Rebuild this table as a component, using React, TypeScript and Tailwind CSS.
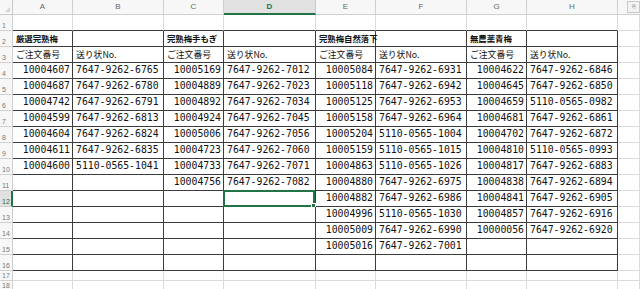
import React from "react";

const cols = ["A", "B", "C", "D", "E", "F", "G", "H", ""];

const groups: [string, [string, string][]][] = [
  [
    "厳選完熟梅",
    [
      ["10004607", "7647-9262-6765"],
      ["10004687", "7647-9262-6780"],
      ["10004742", "7647-9262-6791"],
      ["10004599", "7647-9262-6813"],
      ["10004604", "7647-9262-6824"],
      ["10004611", "7647-9262-6835"],
      ["10004600", "5110-0565-1041"],
    ],
  ],
  [
    "完熟梅手もぎ",
    [
      ["10005169", "7647-9262-7012"],
      ["10004889", "7647-9262-7023"],
      ["10004892", "7647-9262-7034"],
      ["10004924", "7647-9262-7045"],
      ["10005006", "7647-9262-7056"],
      ["10004723", "7647-9262-7060"],
      ["10004733", "7647-9262-7071"],
      ["10004756", "7647-9262-7082"],
    ],
  ],
  [
    "完熟梅自然落下",
    [
      ["10005084", "7647-9262-6931"],
      ["10005118", "7647-9262-6942"],
      ["10005125", "7647-9262-6953"],
      ["10005158", "7647-9262-6964"],
      ["10005204", "5110-0565-1004"],
      ["10005159", "5110-0565-1015"],
      ["10004863", "5110-0565-1026"],
      ["10004880", "7647-9262-6975"],
      ["10004882", "7647-9262-6986"],
      ["10004996", "5110-0565-1030"],
      ["10005009", "7647-9262-6990"],
      ["10005016", "7647-9262-7001"],
    ],
  ],
  [
    "無農薬青梅",
    [
      ["10004622", "7647-9262-6846"],
      ["10004645", "7647-9262-6850"],
      ["10004659", "5110-0565-0982"],
      ["10004681", "7647-9262-6861"],
      ["10004702", "7647-9262-6872"],
      ["10004810", "5110-0565-0993"],
      ["10004817", "7647-9262-6883"],
      ["10004838", "7647-9262-6894"],
      ["10004841", "7647-9262-6905"],
      ["10004857", "7647-9262-6916"],
      ["10000056", "7647-9262-6920"],
    ],
  ],
];

type CellData = { text: string; kind: "title" | "label" | "num" | "track" | "" };

function cellAt(row: number, col: number): CellData {
  // row 1..18, col 0..8 (A..I)
  if (col > 7) return { text: "", kind: "" };
  const g = groups[Math.floor(col / 2)];
  const isOrder = col % 2 === 0;
  if (row === 2) return isOrder ? { text: g[0], kind: "title" } : { text: "", kind: "" };
  if (row === 3) return { text: isOrder ? "ご注文番号" : "送り状No.", kind: "label" };
  const item = g[1][row - 4];
  if (row >= 4 && item) return isOrder ? { text: item[0], kind: "num" } : { text: item[1], kind: "track" };
  return { text: "", kind: "" };
}

function Cell({ row, col }: { row: number; col: number }) {
  const inTable = row >= 2 && row <= 16 && col <= 7;
  const aboveTable = row === 1 && col <= 7;
  const selected = row === 12 && col === 3;
  const c = cellAt(row, col);

  let border = "border-r border-b border-[#dadada]";
  if (inTable) border = "border-r border-b border-[#3c3c3c]";
  else if (aboveTable) border = "border-r border-b border-r-[#dadada] border-b-[#3c3c3c]";

  let content: React.ReactNode = null;
  if (c.kind === "title")
    content = <span className="pl-[3px] text-[8.4px] font-bold font-['Noto_Sans_CJK_JP',sans-serif] whitespace-nowrap">{c.text}</span>;
  else if (c.kind === "label")
    content = <span className="pl-[3px] text-[8.8px] font-['Noto_Sans_CJK_JP',sans-serif] whitespace-nowrap">{c.text}</span>;
  else if (c.kind === "num") content = <span className="ml-auto pr-[2px] text-[9.8px] whitespace-nowrap">{c.text}</span>;
  else if (c.kind === "track") content = <span className="pl-[3px] text-[9.8px] whitespace-nowrap">{c.text}</span>;

  return (
    <div className={`relative flex items-center min-w-0 text-[#111] ${border}`}>
      {content}
      {selected && (
        <div className="absolute -left-px -top-px right-0 bottom-[-1px] border-2 border-[#217346]">
          <div className="absolute -right-[3px] -bottom-[3px] w-[5px] h-[5px] bg-[#217346] border border-white" />
        </div>
      )}
    </div>
  );
}

export default function App() {
  const rows = Array.from({ length: 18 }, (_, i) => i + 1);
  return (
    <div className="w-[640px] h-[289px] overflow-hidden bg-white font-['DejaVu_Sans_Mono','Noto_Sans_CJK_JP',monospace]">
      <div className="grid grid-cols-[13px_60px_91px_60px_92px_60px_91px_60px_91px_1fr] grid-rows-[15px_repeat(16,16px)_10px_10px]">
        <div className="flex items-end justify-end pr-[2px] pb-[2px] bg-[#f7f7f7] border-r border-b border-[#c9c9c9]">
          <div className="w-0 h-0 border-l-[5px] border-l-transparent border-b-[5px] border-b-[#d3d3d3]" />
        </div>
        {cols.map((h, i) =>
          h === "D" ? (
            <div key={i} className="flex items-center justify-center bg-[#e1e1e1] border-r border-[#c9c9c9] border-b-2 border-b-[#217346] text-[8px] font-bold text-[#217346] font-['Liberation_Sans',sans-serif]">
              {h}
            </div>
          ) : i === 8 ? (
            <div key={i} className="flex items-start justify-end bg-[#f7f7f7] border-b border-[#d0d0d0]">
              <div className="mt-[1px] w-[13px] h-[12px] bg-[#f3f3f3] border border-[#c8c8c8] text-[5px] leading-[6px] text-[#666] flex items-start justify-center pt-[1px]">
                ⎘
              </div>
            </div>
          ) : (
            <div key={i} className="flex items-center justify-center bg-[#f7f7f7] border-r border-b border-[#d0d0d0] text-[8px] text-[#666] font-['Liberation_Sans',sans-serif]">
              {h}
            </div>
          )
        )}
        {rows.map((r) => (
          <React.Fragment key={r}>
            {r === 12 ? (
              <div className="flex items-end pl-[2px] pb-[1px] bg-[#e1e1e1] border-r-2 border-r-[#217346] border-b border-b-[#d0d0d0] text-[7px] leading-none text-[#217346] font-['Liberation_Sans',sans-serif]">
                {r}
              </div>
            ) : (
              <div className="flex items-end pl-[2px] pb-[1px] bg-[#f7f7f7] border-r border-b border-[#d0d0d0] text-[7px] leading-none text-[#777] font-['Liberation_Sans',sans-serif]">
                {r}
              </div>
            )}
            {cols.map((_, c) => (
              <Cell key={c} row={r} col={c} />
            ))}
          </React.Fragment>
        ))}
      </div>
    </div>
  );
}
